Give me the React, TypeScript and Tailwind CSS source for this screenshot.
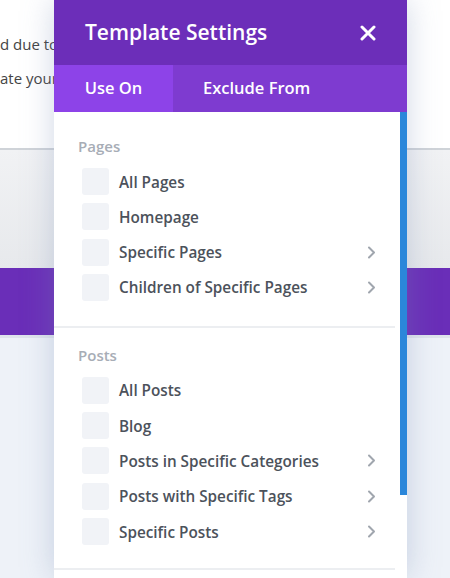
import React from "react";

type Item = { label: string; more?: boolean };

const pages: Item[] = [
  { label: "All Pages" },
  { label: "Homepage" },
  { label: "Specific Pages", more: true },
  { label: "Children of Specific Pages", more: true },
];

const posts: Item[] = [
  { label: "All Posts" },
  { label: "Blog" },
  { label: "Posts in Specific Categories", more: true },
  { label: "Posts with Specific Tags", more: true },
  { label: "Specific Posts", more: true },
];

function Chevron() {
  return (
    <svg width="9" height="13" viewBox="0 0 9 13" fill="none">
      <path d="M2 1.5 L7 6.5 L2 11.5" stroke="#a0a6ae" strokeWidth="2" strokeLinecap="round" strokeLinejoin="round" />
    </svg>
  );
}

function Section({ title, items, top }: { title: string; items: Item[]; top: "first" | "next" }) {
  return (
    <div className={top === "first" ? "pt-[24px] pb-[25px]" : "pt-[17px] pb-[23px]"}>
      <div className="pl-[24px] text-[15px] leading-[20px] font-semibold text-[#a7adb6]">{title}</div>
      <div className="mt-[12px] flex flex-col gap-[8.3px] pl-[28px] pr-[24px]">
        {items.map((it) => (
          <div key={it.label} className="flex h-[27px] items-center">
            <div className="h-[27px] w-[27px] shrink-0 rounded-[3px] bg-[#f1f3f7]" />
            <span className="ml-[10px] flex-1 text-[15.3px] leading-[20px] font-semibold text-[#4c525b]">{it.label}</span>
            {it.more && <Chevron />}
          </div>
        ))}
      </div>
    </div>
  );
}

export default function App() {
  return (
    <div
      className="relative h-[578px] w-[450px] overflow-hidden bg-[#eef2f8]"
      style={{ fontFamily: '"Open Sans", "Noto Sans", sans-serif' }}
    >
      {/* page behind the dialog */}
      <div className="flex flex-col">
        <div className="h-[148px] bg-white pt-[27px] text-[15px] leading-[34px] text-[#444]">
          <p className="whitespace-nowrap">d due to</p>
          <p className="whitespace-nowrap">ate your</p>
        </div>
        <div className="h-[2px] bg-[#cfd3d8]" />
        <div className="h-[118px] bg-gradient-to-b from-[#f1f2f4] to-[#e7e9ec]" />
        <div className="h-[67px] bg-[#6a2eb8]" />
        <div className="h-[3px] bg-[#dfe4ec]" />
        <div className="flex-1 bg-[#eef2f8]" />
      </div>

      {/* template settings dialog */}
      <div className="absolute left-[54px] top-0 flex w-[353px] flex-col shadow-[0_0_30px_rgba(120,140,180,0.35)]">
        <div className="flex h-[65px] items-center justify-between bg-[#6c2eb9] pl-[31px] pr-[31px]">
          <span className="text-[21px] font-semibold text-white">Template Settings</span>
          <svg width="16" height="16" viewBox="0 0 16 16" fill="none">
            <path d="M2 2 L14 14 M14 2 L2 14" stroke="white" strokeWidth="3" strokeLinecap="round" />
          </svg>
        </div>
        <div className="flex h-[47px] bg-[#7e3bd0] text-[16.5px] font-semibold text-white">
          <div className="flex w-[119px] items-center justify-center bg-[#8d43e8]">Use On</div>
          <div className="flex items-center px-[30px]">Exclude From</div>
        </div>
        <div className="flex h-[466px]">
          <div className="flex-1 bg-white">
            <Section title="Pages" items={pages} top="first" />
            <div className="mr-[5px] h-[2px] bg-[#eceef1]" />
            <Section title="Posts" items={posts} top="next" />
            <div className="mr-[5px] h-[2px] bg-[#eceef1]" />
          </div>
          <div className="w-[7px] bg-white">
            <div className="h-[383px] bg-[#2b87da]" />
          </div>
        </div>
      </div>
    </div>
  );
}
